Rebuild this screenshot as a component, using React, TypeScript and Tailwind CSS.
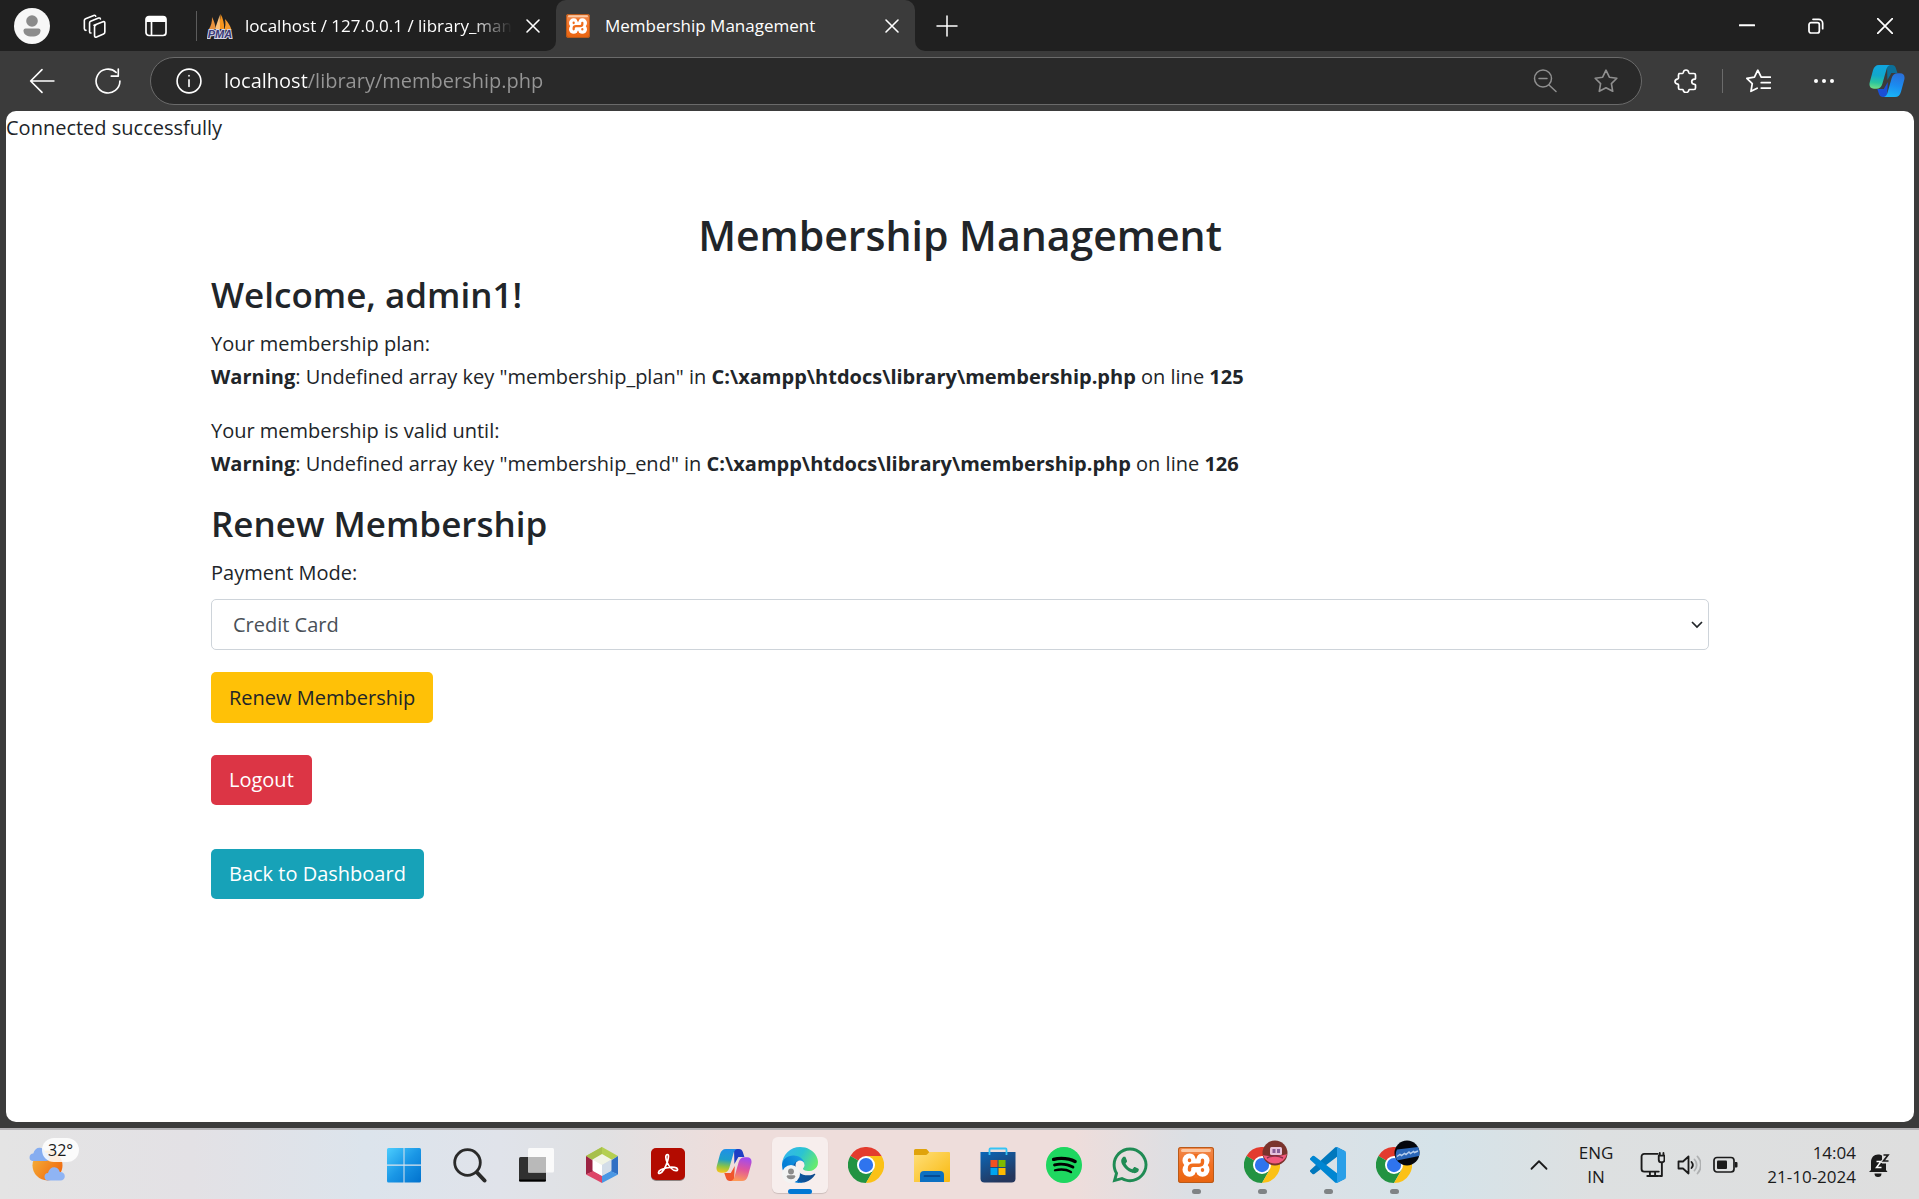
import React, { useState } from "react";
import { FaSpotify, FaWhatsapp } from "react-icons/fa6";

/* ---------- browser chrome icons ---------- */

type IconProps = { className?: string };

function Line({
  children,
  className = "size-6",
  width = 1.5,
}: {
  children: React.ReactNode;
  className?: string;
  width?: number;
}) {
  return (
    <svg
      viewBox="0 0 24 24"
      className={className}
      fill="none"
      stroke="currentColor"
      strokeWidth={width}
      strokeLinecap="round"
      strokeLinejoin="round"
      aria-hidden="true"
    >
      {children}
    </svg>
  );
}

function Avatar({ className }: IconProps) {
  return (
    <svg viewBox="0 0 36 36" className={className} aria-hidden="true">
      <circle cx="18" cy="18" r="18" fill="#f7f7f7" />
      <circle cx="18" cy="13" r="5.8" fill="#8b8b8b" />
      <path d="M9.5 22.5a2 2 0 0 1 2-2h13a2 2 0 0 1 2 2c0 4-3.500 6-8.500 6s-8.500-2-8.500-6Z" fill="#8b8b8b" />
    </svg>
  );
}

function Workspaces() {
  return (
    <Line className="size-[26px]" width={1.5}>
      <path d="M12 11.200 20.300 8c.9-.3 1.700.2 1.700 1.100v8.500c0 .8-.4 1.500-1.200 1.800l-6.400 2.800c-1 .4-1.900-.1-1.900-1.200v-8.200c0-.7.300-1.200 1-1.500" />
      <path d="M9.200 18.500c-.9 0-1.300-.5-1.300-1.300V9.200c0-.8.3-1.300 1-1.600l7.300-2.900c.8-.3 1.500 0 1.700.7" />
      <path d="M4.600 16c-.9 0-1.500-.6-1.500-1.500V6.800c0-.8.400-1.300 1.100-1.600l7.600-3c.8-.3 1.600 0 1.700.8" />
    </Line>
  );
}

function TabActions() {
  return (
    <svg viewBox="0 0 24 24" className="size-6" fill="none" aria-hidden="true">
      <rect x="2" y="2.500" width="20" height="19" rx="3" stroke="white" strokeWidth="1.700" />
      <path d="M2 5.500a3 3 0 0 1 3-3h14a3 3 0 0 1 3 3V8H2Z" fill="white" />
      <path d="M7.500 8v13" stroke="white" strokeWidth="1.700" />
    </svg>
  );
}

function PmaLogo() {
  return (
    <svg viewBox="0 0 26 26" className="h-[26px] w-[26px] shrink-0" aria-hidden="true">
      <path d="M13.500 1c2.500 4 4 10 3.500 15h-7c2.500-4 3.500-9 3.500-15Z" fill="#f7941d" />
      <path d="M5 4c2 4 3.500 8 3.500 12H2c2-3 3.200-7 3-12Z" fill="#e8913c" />
      <path d="M18 6c3 3 5.500 7 6.500 11H17c1.500-3 1.800-7 1-11Z" fill="#f59a2f" />
      <path d="m8 16 4.800-14L13 16Z" fill="#ffc27a" />
      <text
        x="13"
        y="24.500"
        textAnchor="middle"
        fontFamily="Liberation Sans, sans-serif"
        fontSize="11"
        fontWeight="700"
        fontStyle="italic"
        fill="#3a3a78"
        stroke="#d5d5e5"
        strokeWidth="2"
        paintOrder="stroke"
      >
        PMA
      </text>
    </svg>
  );
}

function XamppLogo({ className }: IconProps) {
  return (
    <span
      className={`flex shrink-0 items-center justify-center rounded-[3px] bg-linear-to-b from-[#f08a4c] via-[#f37021] to-[#e8640f] ring-1 ring-[#b95a1a] ring-inset ${className}`}
    >
      <svg viewBox="0 0 36 36" className="size-full" fill="none" aria-hidden="true">
        <rect x="3" y="2" width="30" height="3" rx="1.500" fill="#fbc7a2" />
        <g fill="#fff">
          <circle cx="11.500" cy="13.500" r="7" />
          <circle cx="24.500" cy="13.500" r="7" />
          <circle cx="11.500" cy="22.800" r="7" />
          <circle cx="24.500" cy="22.800" r="7" />
          <path d="M11 11h14v14.500H11Z" />
        </g>
        <path d="M18 12.600 15.800 7h4.400ZM18 24.500 15.800 31h4.400Z" fill="#f06d1d" />
        <g stroke="#f06d1d" strokeWidth="3.400" strokeLinecap="round" strokeLinejoin="round">
          <path d="M11.500 13v.5M11.500 23v-1.500c0-2 1-3.300 3.500-3.300h6c2.500 0 3.500-1.200 3.500-3.200v-1.800M24.500 22.800v.4" />
        </g>
      </svg>
    </span>
  );
}

function Close({ className = "size-6" }: IconProps) {
  return (
    <Line className={className} width={1.6}>
      <path d="m6 6 12 12M18 6 6 18" />
    </Line>
  );
}

function CopilotLogo({ className, warm }: IconProps & { warm?: boolean }) {
  const id = warm ? "cw" : "cc";
  return (
    <svg viewBox="0 0 36 34" className={className} aria-hidden="true">
      <defs>
        <linearGradient id={`${id}l`} x1="0.500" y1="0" x2="0.400" y2="1">
          <stop offset="0" stopColor={warm ? "#1f8fe8" : "#0fa5e0"} />
          <stop offset="0.450" stopColor={warm ? "#1e9fc9" : "#12a8cc"} />
          <stop offset="0.750" stopColor={warm ? "#8fc443" : "#29c4a0"} />
          <stop offset="1" stopColor={warm ? "#f5c51c" : "#6fdd86"} />
        </linearGradient>
        <linearGradient id={`${id}r`} x1="0.600" y1="0" x2="0.400" y2="1">
          <stop offset="0" stopColor={warm ? "#a04bf0" : "#2a6fd8"} />
          <stop offset="0.500" stopColor={warm ? "#e0559c" : "#1b8bf0"} />
          <stop offset="1" stopColor={warm ? "#fd9a58" : "#19b5f8"} />
        </linearGradient>
      </defs>
      <path d="M18 1h5c2 0 3.200 1 3.800 3l1.600 5h-6l-4 7Z" fill={warm ? "#1f3fc4" : "#0c6f98"} />
      <path d="M18 33h-4c-2 0-3.400-1-4-3L8.300 25h6.500l4-7Z" fill={warm ? "#f0552c" : "#1a4fd6"} />
      <path d="M10 1h11c-2.300.8-3 2.500-3.700 5l-4 14c-.9 3-2.800 4.700-6 4.700H5C1 24.700-.2 21.800.8 18L4 6.300C5 3 6.800 1 10 1Z" fill={`url(#${id}l)`} />
      <path d="M26 33H15c2.300-.8 3-2.500 3.700-5l4-14c.9-3 2.800-4.700 6-4.700H31c4 0 5.200 2.900 4.200 6.700L32 27.700c-1 3.300-2.800 5.300-6 5.300Z" fill={`url(#${id}r)`} />
    </svg>
  );
}

/* ---------- taskbar icons ---------- */

function WindowsLogo() {
  return (
    <svg viewBox="0 0 36 36" className="size-9" aria-hidden="true">
      <defs>
        <linearGradient id="win" gradientUnits="userSpaceOnUse" x1="0" y1="0" x2="36" y2="36">
          <stop offset="0" stopColor="#4fd0ff" />
          <stop offset="0.500" stopColor="#1a97e6" />
          <stop offset="1" stopColor="#0070cc" />
        </linearGradient>
      </defs>
      <g fill="url(#win)">
        <path d="M2.500 1H17.500V17.500H1V2.500A1.500 1.500 0 0 1 2.500 1Z" />
        <path d="M18.500 1h15A1.500 1.500 0 0 1 35 2.500v15H18.500Z" />
        <path d="M1 18.700h16.500V35.500h-15A1.500 1.500 0 0 1 1 34Z" />
        <path d="M18.500 18.700H35V34a1.500 1.500 0 0 1-1.500 1.500h-15Z" />
      </g>
    </svg>
  );
}

function SearchGlyph() {
  return (
    <svg viewBox="0 0 36 36" className="size-9" fill="none" stroke="#2a2a2a" aria-hidden="true">
      <circle cx="15.500" cy="15.500" r="12.800" strokeWidth="2.800" />
      <path d="m25 25.500 7.500 8" strokeWidth="4" strokeLinecap="round" />
    </svg>
  );
}

function TaskView() {
  return (
    <svg viewBox="0 0 36 36" className="size-9" aria-hidden="true">
      <rect x="1" y="10" width="27" height="24.500" rx="1.500" fill="#303030" />
      <rect x="1" y="32.500" width="27" height="2" rx="1" fill="#000" />
      <rect x="10" y="1" width="26" height="24.500" rx="1.500" fill="#fafafa" />
      <rect x="10" y="10" width="18" height="15.500" fill="#b9b9b9" />
    </svg>
  );
}

function NetBeans() {
  return (
    <svg viewBox="0 0 36 36" className="size-9" aria-hidden="true">
      <path d="M18 0 34 9l-7 4-9-5-9 5-7-4Z" fill="#b4cf50" />
      <path d="M18 0v8l-9 5-7-4Z" fill="#a7c04a" />
      <path d="M2 9l7 4.500v11L2 27.500Z" fill="#9b2343" />
      <path d="M34 9l-7 4.500v11l7 3Z" fill="#2f6fc4" />
      <path d="M2 27.500 9 24l9 4.500V36Z" fill="#dd4668" />
      <path d="M34 27.500 27 24l-9 4.500V36Z" fill="#4a97e4" />
      <path d="m18 7 9.500 5.500L18 18l-9.500-5.500Z" fill="#f1f4e4" />
      <path d="M8.500 12.500 18 18v11l-9.500-5.500Z" fill="#fff" />
      <path d="M27.500 12.500 18 18v11l9.500-5.500Z" fill="#d3dde8" />
    </svg>
  );
}

function Acrobat() {
  return (
    <svg viewBox="0 0 36 36" className="size-9" fill="none" aria-hidden="true">
      <rect x="1" y="2" width="34" height="32" rx="5" fill="#8d8482" />
      <rect x="1" y="1" width="34" height="32" rx="5" fill="#b30b00" />
      <path
        d="M17.500 7.500c-2.600 0-1.800 4.800-.3 8 1.700 3.700 5.300 8 8.700 8.200 2.500.1 2.300-2.900-1.300-3.400-4.700-.6-10.200.6-13.700 2.500-3.200 1.800-3 4.400-.8 3.500 2.900-1.200 6-7.600 7.500-12.300.8-2.600 1.500-6.500-.1-6.500Z"
        stroke="#fff"
        strokeWidth="1.700"
      />
    </svg>
  );
}

function EdgeLogo() {
  return (
    <svg viewBox="0 0 256 256" className="size-9" aria-hidden="true">
      <defs>
        <linearGradient id="ea" x1="0.200" y1="0.500" x2="1" y2="0.500">
          <stop offset="0" stopColor="#0c59a4" />
          <stop offset="1" stopColor="#114a8b" />
        </linearGradient>
        <linearGradient id="eb" x1="0.900" y1="0.200" x2="0.200" y2="0.900">
          <stop offset="0" stopColor="#1b9de2" />
          <stop offset="0.600" stopColor="#0680d7" />
          <stop offset="1" stopColor="#0078d4" />
        </linearGradient>
        <linearGradient id="ec" x1="0" y1="0.200" x2="1" y2="0.600">
          <stop offset="0" stopColor="#35b4ee" />
          <stop offset="0.500" stopColor="#2bc3d2" />
          <stop offset="1" stopColor="#66eb6e" />
        </linearGradient>
      </defs>
      <g transform="translate(-4.630 -4.920)">
        <path
          fill="url(#ea)"
          d="M235.680 195.460a93.730 93.730 0 0 1-10.540 4.710 101.870 101.870 0 0 1-35.900 6.460c-47.320 0-88.540-32.550-88.540-74.320A31.480 31.480 0 0 1 117.130 105c-42.800 1.800-53.800 46.400-53.800 72.530 0 73.880 68.090 81.370 82.760 81.370 7.910 0 19.840-2.300 27-4.560l1.310-.44a128.340 128.340 0 0 0 66.600-52.800 4 4 0 0 0-5.320-5.640Z"
        />
        <path
          fill="url(#eb)"
          d="M110.340 246.340A79.200 79.200 0 0 1 87.600 225a80.720 80.720 0 0 1 29.530-120c3.120-1.470 8.450-4.130 15.540-4a32.350 32.350 0 0 1 25.690 13 31.880 31.880 0 0 1 6.360 18.660c0-.21 24.460-79.600-80-79.600-43.900 0-80 41.660-80 78.210a130.150 130.150 0 0 0 12.110 56 128 128 0 0 0 156.380 67.110 75.550 75.550 0 0 1-62.780-8Z"
        />
        <path
          fill="url(#ec)"
          d="M156.940 153.780c-.81 1.050-3.300 2.500-3.300 5.660 0 2.610 1.700 5.120 4.720 7.230 14.380 10 41.490 8.680 41.560 8.680a59.560 59.560 0 0 0 30.270-8.350 61.380 61.380 0 0 0 30.430-52.880c.26-22.410-8-37.310-11.340-43.910C228.090 28.760 182.350 4.920 132.610 4.920a128 128 0 0 0-128 126.200c.48-36.540 36.800-66.050 80-66.050 3.500 0 23.460.34 42 10.070 16.340 8.580 24.900 18.940 30.850 29.210 6.180 10.670 7.280 24.150 7.280 29.520s-2.740 13.330-7.800 19.910Z"
        />
      </g>
      <circle cx="64" cy="192" r="64" fill="#f3f3f3" />
      <circle cx="64" cy="174" r="21" fill="#8b8b8b" />
      <path d="M34 208a8 8 0 0 1 8-8h44a8 8 0 0 1 8 8c0 14-13 21-30 21s-30-7-30-21Z" fill="#8b8b8b" />
    </svg>
  );
}

function Chrome() {
  return (
    <svg viewBox="0 0 48 48" className="size-9" aria-hidden="true">
      <path d="M24 24 3.200 12A24 24 0 0 1 44.800 12Z" fill="#e33b2e" />
      <path d="M24 24h-.01L3.200 12A24 24 0 0 0 24 48l10.400-18Z" fill="#229342" />
      <path d="M24 12h20.800A24 24 0 0 1 24 48l10.400-18Z" fill="#fbc116" />
      <circle cx="24" cy="24" r="12" fill="#fff" />
      <circle cx="24" cy="24" r="9.500" fill="#2f74ee" />
    </svg>
  );
}

function Explorer() {
  return (
    <svg viewBox="0 0 36 36" className="size-9" aria-hidden="true">
      <defs>
        <linearGradient id="fold" x1="0" y1="0" x2="1" y2="1">
          <stop offset="0" stopColor="#ffdf79" />
          <stop offset="1" stopColor="#f9b90f" />
        </linearGradient>
      </defs>
      <path d="M0 3.500A1.500 1.500 0 0 1 1.500 2h10c1 0 1.500.5 2 1l2 2.500V9H0Z" fill="#e0a30b" />
      <path d="M0 8h11c1.500 0 2-.5 3-1.500S15.500 5 17 5h18a1 1 0 0 1 1 1v28a1 1 0 0 1-1 1H0Z" fill="url(#fold)" />
      <path d="M6 28a4 4 0 0 1 4-4h16a4 4 0 0 1 4 4v7H6Z" fill="#0c70c2" />
      <path d="M10.500 29h15" stroke="#053f85" strokeWidth="1.700" strokeLinecap="round" />
    </svg>
  );
}

function Store() {
  return (
    <svg viewBox="0 0 36 36" className="size-9" aria-hidden="true">
      <defs>
        <linearGradient id="store" x1="0" y1="0" x2="0.500" y2="1">
          <stop offset="0" stopColor="#0b67b8" />
          <stop offset="1" stopColor="#25365c" />
        </linearGradient>
      </defs>
      <path d="M.5 5h35v26.500a4 4 0 0 1-4 4h-27a4 4 0 0 1-4-4Z" fill="url(#store)" />
      <path d="M9.500 8V2.500a1 1 0 0 1 1-1h15a1 1 0 0 1 1 1V8" fill="none" stroke="#35c4f5" strokeWidth="1.800" />
      <path d="M10.500 13h7v7h-7Z" fill="#f25022" />
      <path d="M18.500 13h7v7h-7Z" fill="#7fba00" />
      <path d="M10.500 21h7v7h-7Z" fill="#00a4ef" />
      <path d="M18.500 21h7v7h-7Z" fill="#ffb900" />
    </svg>
  );
}

function Spotify() {
  return (
    <span className="flex size-9 items-center justify-center rounded-full bg-[radial-gradient(#000_60%,#1ed760_61%)]">
      <FaSpotify className="size-9 text-[#1ed760]" />
    </span>
  );
}

function VsCode() {
  return (
    <svg viewBox="0 0 100 100" className="size-9" aria-hidden="true">
      <path fill="#0078bd" d="M96.461 10.796 75.857.876a6.230 6.230 0 0 0-7.107 1.207L1.299 63.583a4.170 4.170 0 0 0 .004 6.162l5.510 5.010a4.170 4.170 0 0 0 5.321.236L93.361 13.370c2.725-2.067 6.639-.124 6.639 3.297v-.24a6.250 6.250 0 0 0-3.539-5.631Z" />
      <path fill="#0086d2" d="m96.461 89.204-20.604 9.920a6.230 6.230 0 0 1-7.107-1.207L1.299 36.417a4.170 4.170 0 0 1 .004-6.162l5.510-5.010a4.170 4.170 0 0 1 5.321-.236L93.361 86.630c2.725 2.067 6.639.124 6.639-3.297v.24a6.250 6.250 0 0 1-3.539 5.631Z" />
      <path fill="#2a9fe8" d="M75.858 99.126a6.230 6.230 0 0 1-7.108-1.209c2.306 2.306 6.250.672 6.250-2.590V4.673c0-3.262-3.944-4.896-6.250-2.590A6.230 6.230 0 0 1 75.858.874l20.600 9.907A6.250 6.250 0 0 1 100 16.413v67.174a6.250 6.250 0 0 1-3.541 5.633Z" />
    </svg>
  );
}

function ChromeWithProfile({ children }: { children: React.ReactNode }) {
  return (
    <span className="relative block size-9">
      <Chrome />
      <svg viewBox="0 0 26 26" className="absolute -top-[7px] left-[18px] size-[26px]" aria-hidden="true">
        {children}
      </svg>
    </span>
  );
}

const PinkProfile = (
  <>
    <circle cx="13" cy="13" r="12.500" fill="#7a332c" />
    <path d="M1 15c5 2 20 1 24-1a12.500 12.500 0 0 1-24 1Z" fill="#f2587d" />
    <rect x="8" y="7" width="12" height="8" rx="1.500" fill="#e6c3dc" />
    <rect x="10.500" y="9" width="3" height="4" fill="#8a5f96" />
    <rect x="15" y="9" width="3" height="4" fill="#8a5f96" />
    <path d="M5 18c5-3 12-2 16 0" stroke="#8c2f4b" strokeWidth="1.500" fill="none" />
  </>
);

const BlueProfile = (
  <>
    <circle cx="13" cy="13" r="12.500" fill="#05070d" />
    <path d="M3 9.500 24 7a12.500 12.500 0 0 1 1 9L3 20.500A12.500 12.500 0 0 1 3 9.500Z" fill="#2a66b8" />
    <path d="m3 16.500 3-2 1.500 1 3-2 1.500 1 3-2.500 1.500 1.500 3-2 1 1 3.500-1.500" stroke="#b5cdec" strokeWidth="1.500" fill="none" />
  </>
);

function Weather() {
  return (
    <svg viewBox="0 0 40 36" className="h-9 w-10" aria-hidden="true">
      <defs>
        <linearGradient id="sun" x1="0" y1="0" x2="1" y2="0.700">
          <stop offset="0" stopColor="#f6b73c" />
          <stop offset="1" stopColor="#f0690f" />
        </linearGradient>
      </defs>
      <circle cx="18.500" cy="18.500" r="15" fill="url(#sun)" />
      <path d="M3.500 14a3.800 3.800 0 0 1 .8-7.500C5.500 2.500 8 .5 11 .8c3 .2 5 2.500 5.500 5 3 0 4.500 2 4.500 4.200S19.500 14 17 14Z" fill="#86adf0" />
      <path d="M18.500 33.500a3.800 3.800 0 0 1 .5-7.500c1-4 3.500-6 6.500-5.800 3 .2 4.700 2.300 5.300 4.800 3-.2 5 1.800 5 4.200 0 2.500-1.800 4.300-4.300 4.300Z" fill="#8fb4f4" />
    </svg>
  );
}

type App = { name: string; icon: React.ReactNode; state?: "active" | "running" };

const apps: App[] = [
  { name: "Start", icon: <WindowsLogo /> },
  { name: "Search", icon: <SearchGlyph /> },
  { name: "Task view", icon: <TaskView /> },
  { name: "NetBeans", icon: <NetBeans /> },
  { name: "Acrobat", icon: <Acrobat /> },
  { name: "Copilot", icon: <CopilotLogo className="h-[34px] w-9" warm /> },
  { name: "Edge", icon: <EdgeLogo />, state: "active" },
  { name: "Chrome", icon: <Chrome /> },
  { name: "File Explorer", icon: <Explorer /> },
  { name: "Store", icon: <Store /> },
  { name: "Spotify", icon: <Spotify /> },
  { name: "WhatsApp", icon: <FaWhatsapp className="size-[40px] text-[#1f8b54]" /> },
  { name: "XAMPP", icon: <XamppLogo className="size-9" />, state: "running" },
  { name: "Chrome profile 1", icon: <ChromeWithProfile>{PinkProfile}</ChromeWithProfile>, state: "running" },
  { name: "Visual Studio Code", icon: <VsCode />, state: "running" },
  { name: "Chrome profile 2", icon: <ChromeWithProfile>{BlueProfile}</ChromeWithProfile>, state: "running" },
];

/* ---------- sections ---------- */

function TabStrip() {
  return (
    <div className="flex h-[51px] bg-[#3b3b3b] text-white">
      <div className="flex w-[556px] shrink-0 items-center rounded-br-[10px] bg-[#202020]">
        <button aria-label="Profile" className="flex w-16 justify-center">
          <Avatar className="size-9" />
        </button>
        <button aria-label="Workspaces" className="flex w-[60px] justify-center">
          <Workspaces />
        </button>
        <button aria-label="Tab actions" className="flex w-16 justify-center">
          <TabActions />
        </button>
        <div className="ml-2 h-[30px] w-px bg-[#5c5c5c]" />
        <div className="flex min-w-0 flex-1 items-center pr-[11px] pl-[10px]">
          <PmaLogo />
          <span className="ml-3 mask-r-from-85% text-[17px] leading-6 whitespace-nowrap">
            localhost / 127.0.0.1 / library_man
          </span>
          <button aria-label="Close tab" className="ml-auto">
            <Close />
          </button>
        </div>
      </div>
      <div className="w-[359px] shrink-0 bg-[#202020]">
        <div className="flex h-full items-center rounded-t-[10px] bg-[#3b3b3b] pr-[11px] pl-[10px]">
          <XamppLogo className="size-6" />
          <span className="ml-[15px] flex-1 text-[17px] leading-6 whitespace-nowrap">Membership Management</span>
          <button aria-label="Close tab">
            <Close />
          </button>
        </div>
      </div>
      <div className="flex flex-1 items-center rounded-bl-[10px] bg-[#202020]">
        <button aria-label="New tab" className="ml-5">
          <Line className="size-6">
            <path d="M12 2v20M2 12h20" />
          </Line>
        </button>
        <div className="ml-auto flex">
          <button aria-label="Minimize" className="flex w-[69px] justify-center">
            <Line className="size-4" width={3}>
              <path d="M1 11h22" />
            </Line>
          </button>
          <button aria-label="Restore" className="flex w-[69px] justify-center">
            <Line className="size-4" width={2.6}>
              <rect x="1.500" y="7" width="15.500" height="15.500" rx="3" />
              <path d="M7.500 2H16a6 6 0 0 1 6 6v8" />
            </Line>
          </button>
          <button aria-label="Close window" className="flex w-[69px] justify-center">
            <Line className="size-4" width={2.6}>
              <path d="m1 1 22 22M23 1 1 23" />
            </Line>
          </button>
        </div>
      </div>
    </div>
  );
}

const starPath = "m12 2 3.100 6.500 6.900 1-5 4.900 1.200 7.100-6.200-3.300-6.200 3.300L7 14.400 2 9.500l6.900-1Z";

function Toolbar() {
  const [url, setUrl] = useState("localhost/library/membership.php");
  return (
    <div className="flex h-[60px] items-center bg-[#3b3b3b] text-white">
      <button aria-label="Back" className="flex w-[83px] justify-center">
        <Line className="size-[26px]">
          <path d="M23 12H1.500M12 1.500 1.500 12 12 22.500" />
        </Line>
      </button>
      <button aria-label="Refresh" className="flex w-[50px] justify-center">
        <Line className="size-[26px]">
          <path d="M23 12a11 11 0 1 1-3.500-8" />
          <path d="M21.500 1v6.500H15" />
        </Line>
      </button>
      <div className="ml-[17px] flex h-12 flex-1 items-center rounded-full border border-[#6a6a6a] bg-[#292929] pr-[22px] pl-[25px]">
        <Line className="size-[26px] shrink-0">
          <circle cx="12" cy="12" r="11" />
          <path d="M12 11v6M12 7v.3" />
        </Line>
        <input
          aria-label="Address"
          value={url}
          onChange={(e) => setUrl(e.target.value)}
          className="ml-[22px] min-w-0 flex-1 bg-[linear-gradient(90deg,#ffffff_84px,#969696_84px)] bg-clip-text text-xl text-transparent outline-none"
        />
        <div className="flex gap-9 text-[#8f8f8f]">
          <button aria-label="Zoom out">
            <Line className="size-6">
              <circle cx="10" cy="9.500" r="8.500" />
              <path d="M6 9.500h8M16 16l7 6.500" />
            </Line>
          </button>
          <button aria-label="Add to favorites">
            <Line className="size-[26px]">
              <path d={starPath} />
            </Line>
          </button>
        </div>
      </div>
      <button aria-label="Extensions" className="ml-8 flex">
        <Line className="size-6" width={1.7}>
          <path d="M5 4.500h3.500c.4 0 .6-.3.700-.8C9.500 2 10.500 1 12 1s2.500 1 2.800 2.700c.1.500.3.800.7.800H20c1 0 1.500.5 1.500 1.500v3.500c0 .5-.3.700-.8.700-2 .2-3 1.200-3 2.600s1 2.400 3 2.600c.5 0 .8.200.8.700V19c0 1-.5 1.500-1.500 1.500h-4.500c-.4 0-.6.300-.7.800-.3 1.400-1.300 2.200-2.800 2.200s-2.500-.8-2.800-2.200c-.1-.5-.3-.8-.7-.8H6c-1 0-1.500-.5-1.500-1.500v-3c0-.5-.2-.7-.7-.8-1.800-.3-2.800-1.200-2.800-2.700s1-2.400 2.800-2.700c.5-.1.700-.4.700-.8V6c0-1 .5-1.500 1.500-1.500Z" />
        </Line>
      </button>
      <div className="ml-6 h-6 w-px bg-[#6b6b6b]" />
      <button aria-label="Favorites" className="ml-[22px] flex">
        <Line className="size-[26px]" width={1.6}>
          <path d="M14.500 7.600 11.800 2 8.700 8.500l-7 1 5 4.900-1.200 7.100 5.700-2.900M15 8.500h8.500M15 13.500h8.500M15 18.500h8.500" />
        </Line>
      </button>
      <button aria-label="Settings and more" className="ml-[41px] flex">
        <svg viewBox="0 0 24 24" className="size-6" fill="currentColor" aria-hidden="true">
          <circle cx="4" cy="12" r="2" />
          <circle cx="12" cy="12" r="2" />
          <circle cx="20" cy="12" r="2" />
        </svg>
      </button>
      <button aria-label="Copilot" className="mr-[14px] ml-[33px] flex">
        <CopilotLogo className="h-[34px] w-9" />
      </button>
    </div>
  );
}

function Warning({ lead, name, line }: { lead: string; name: string; line: string }) {
  return (
    <p className="mb-[21px]">
      {lead}
      <br />
      <b>Warning</b>: Undefined array key "{name}" in <b>C:\xampp\htdocs\library\membership.php</b> on line{" "}
      <b>{line}</b>
    </p>
  );
}

function Page() {
  return (
    <main className="mr-[5px] ml-[6px] flex-1 overflow-hidden rounded-[10px] bg-white text-xl leading-[33px] text-[#212529]">
      <p>Connected successfully</p>
      <div className="mx-auto mt-[65px] w-full max-w-[1498px]">
        <h2 className="mb-[11px] text-center text-[41px] leading-[52px] font-semibold">Membership Management</h2>
        <h3 className="mb-[9px] text-[35px] leading-[46px] font-semibold">Welcome, admin1!</h3>
        <Warning lead="Your membership plan:" name="membership_plan" line="125" />
        <Warning lead="Your membership is valid until:" name="membership_end" line="126" />
        <h3 className="mb-[9px] text-[35px] leading-[46px] font-semibold">Renew Membership</h3>
        <form onSubmit={(e) => e.preventDefault()}>
          <label htmlFor="mode" className="mb-[10px] block">
            Payment Mode:
          </label>
          <div className="relative">
            <select
              id="mode"
              defaultValue="Credit Card"
              className="block h-[51px] w-full appearance-none rounded-[5px] border border-[#ced4da] bg-white px-[21px] text-[#495057]"
            >
              <option>Credit Card</option>
              <option>Debit Card</option>
              <option>Cash</option>
            </select>
            <svg
              viewBox="0 0 12 8"
              className="pointer-events-none absolute top-[22px] right-[6px] h-2 w-3"
              fill="none"
              stroke="#212529"
              strokeWidth="1.700"
              aria-hidden="true"
            >
              <path d="m1 1 5 5 5-5" />
            </svg>
          </div>
          <button className="mt-[22px] block h-[51px] rounded-[5px] bg-[#ffc107] px-[18px]">Renew Membership</button>
        </form>
        <a href="#logout" className="mt-8 block h-[50px] w-fit rounded-[5px] bg-[#dc3545] px-[18px] leading-[50px] text-white">
          Logout
        </a>
        <a href="#dashboard" className="mt-11 block h-[50px] w-fit rounded-[5px] bg-[#17a2b8] px-[18px] leading-[50px] text-white">
          Back to Dashboard
        </a>
      </div>
    </main>
  );
}

function Taskbar() {
  return (
    <footer className="mt-[6px] flex h-[71px] items-center border-t-2 border-[#b5b3b6] bg-[linear-gradient(90deg,#e4e4e4_0%,#e3e1e5_10%,#dce4ec_19%,#e0e3ea_26%,#e0e1e3_31%,#eedddb_38%,#eedddb_56%,#dbdfe4_62%,#dbe1e6_68%,#d5e3e9_75%,#dde0e1_83%,#dedede_100%)] text-[#1b1b1b]">
      <button aria-label="Weather" className="relative ml-[29px] w-[342px] shrink-0">
        <Weather />
        <span className="absolute -top-[9px] left-[13px] rounded-full bg-white/85 px-[6px] text-base leading-6">32°</span>
      </button>
      <nav className="flex">
        {apps.map((app) => (
          <button
            key={app.name}
            aria-label={app.name}
            className="relative mx-[5px] flex h-14 w-14 items-center justify-center rounded-md data-[state=active]:bg-white/50 data-[state=active]:shadow-[0_1px_1px_rgb(0_0_0/0.15)]"
            data-state={app.state}
          >
            {app.icon}
            {app.state === "active" && <span className="absolute -bottom-px h-[5px] w-6 rounded-full bg-[#0078d4]" />}
            {app.state === "running" && <span className="absolute -bottom-px h-[5px] w-[9px] rounded-full bg-[#7f8385]" />}
          </button>
        ))}
      </nav>
      <div className="ml-auto flex items-center text-[17px] leading-6">
        <button aria-label="Show hidden icons">
          <Line className="size-[18px]" width={2.4}>
            <path d="m2 17 10-10 10 10" />
          </Line>
        </button>
        <button className="ml-[30px] w-[36px] text-center">
          ENG
          <br />
          IN
        </button>
        <button aria-label="Network, volume and battery" className="ml-[26px] flex items-center gap-3">
          <Line className="size-[25px]" width={1.8}>
            <path d="M17 1.800H4a2.500 2.500 0 0 0-2.500 2.500v12A2.500 2.500 0 0 0 4 18.800h14M7 23h10.500M9.500 19v4M14.500 19v4M21 10v13h-2" />
            <path d="M18 3.500h5.500v4A2.500 2.500 0 0 1 21 10h-.5A2.500 2.500 0 0 1 18 7.500ZM19 1v2.500M22.500 1v2.500" />
          </Line>
          <Line className="size-[24px]" width={1.8}>
            <path d="M1.500 8.500v7H6l5.500 5V3.500L6 8.500Z" />
            <path d="M14.500 9a4.500 4.500 0 0 1 0 6" />
            <path d="M17.500 6.500a8 8 0 0 1 0 11M20.500 3.500a12.500 12.500 0 0 1 0 17" stroke="#aeb0b1" />
          </Line>
          <svg viewBox="0 0 25 18" className="h-[18px] w-[25px]" fill="none" aria-hidden="true">
            <rect x="1" y="1.500" width="20" height="14.500" rx="3" stroke="#1b1b1b" strokeWidth="1.700" />
            <rect x="4" y="4.500" width="10" height="8.500" rx="1" fill="#1b1b1b" />
            <path d="M22 6h1.500a1 1 0 0 1 1 1v3.500a1 1 0 0 1-1 1H22Z" fill="#1b1b1b" />
          </svg>
        </button>
        <button className="ml-6 w-[94px] text-right whitespace-nowrap">
          14:04
          <br />
          21-10-2024
        </button>
        <button aria-label="Notifications" className="mr-[29px] ml-3">
          <svg viewBox="0 0 22 24" className="h-6 w-[22px]" aria-hidden="true">
            <path d="M3 9c0-4.500 3-7.500 7-7.500 2 0 3 .5 4 1v8h4v6.500l1.500 2H1l2-2Z" fill="#1b1b1b" />
            <path d="M6.500 20.500h7a3.500 3.500 0 0 1-7 0Z" fill="#1b1b1b" />
            <path d="M8.500 8.500h4.500l-4.500 6h5" stroke="#fff" strokeWidth="1.500" fill="none" />
            <path d="M15.500 2h4.500l-4.500 6h5" stroke="#dedede" strokeWidth="4" fill="none" />
            <path d="M15.500 2h4.500l-4.500 6h5" stroke="#1b1b1b" strokeWidth="1.700" fill="none" />
          </svg>
        </button>
      </div>
    </footer>
  );
}

export default function App() {
  return (
    <div className="flex min-h-screen flex-col bg-[#3b3b3b] font-['Open_Sans','Noto_Sans',sans-serif]">
      <TabStrip />
      <Toolbar />
      <Page />
      <Taskbar />
    </div>
  );
}
